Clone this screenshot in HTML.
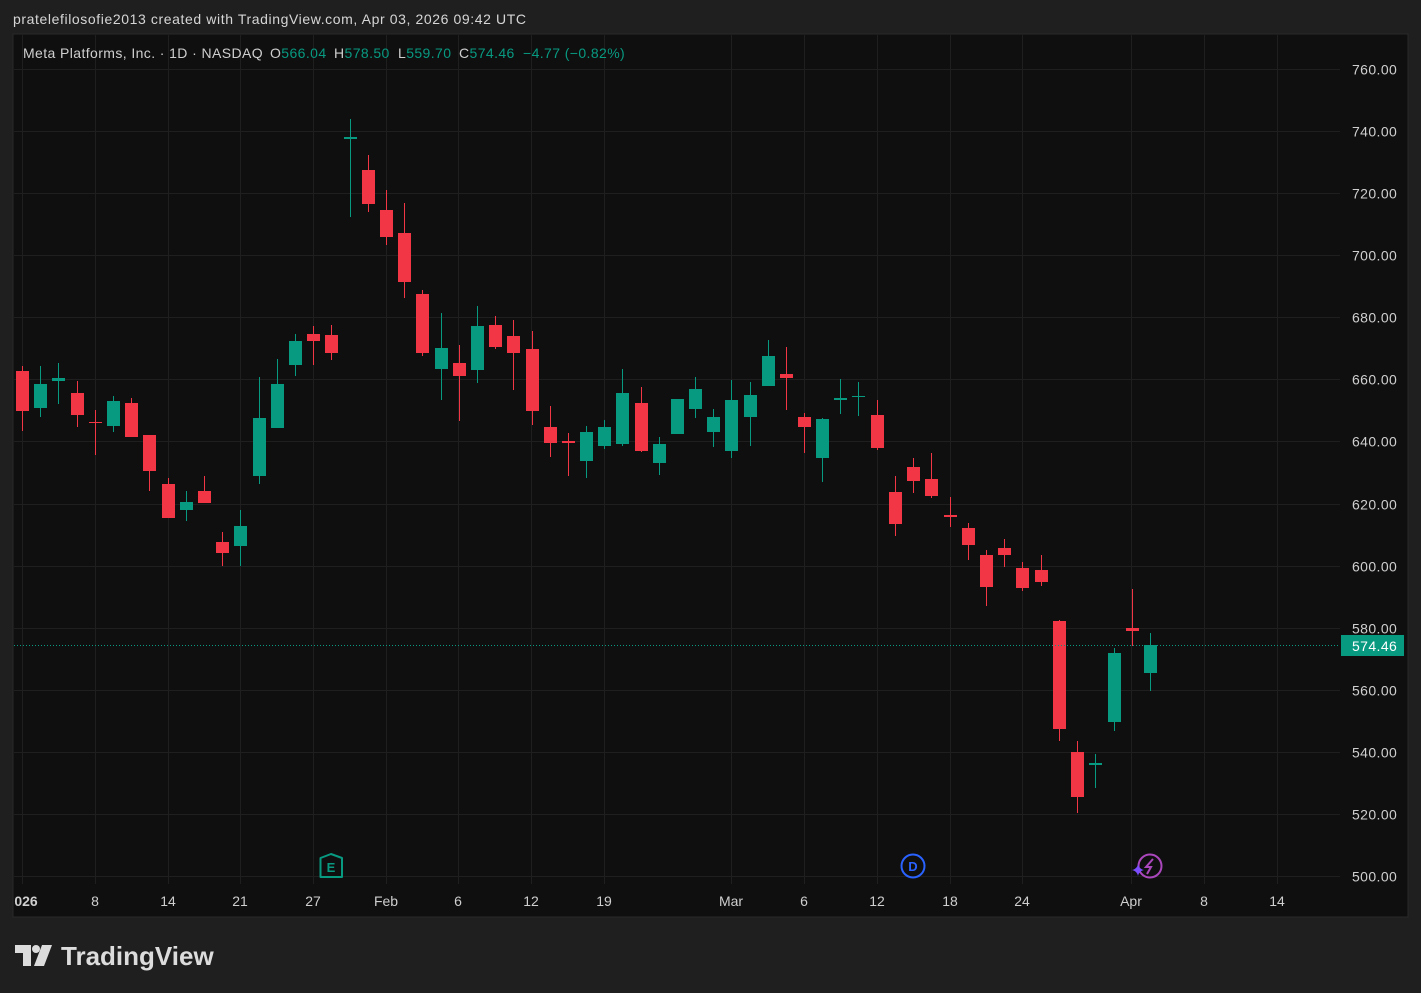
<!DOCTYPE html>
<html><head><meta charset="utf-8"><style>
html,body{margin:0;padding:0;background:#1f1f1f;width:1421px;height:993px;overflow:hidden;font-family:"Liberation Sans",sans-serif}
#hdr{position:absolute;left:13px;top:11px;font-size:14px;color:#d6d6d6;letter-spacing:0.6px}
svg{position:absolute;left:0;top:0}
</style></head><body>
<div id="hdr">pratelefilosofie2013 created with TradingView.com, Apr 03, 2026 09:42 UTC</div>
<svg width="1421" height="993" id="s" xmlns="http://www.w3.org/2000/svg" font-family="Liberation Sans, sans-serif">
<rect x="13" y="34" width="1395" height="883" fill="#0f0f0f" stroke="#2a2a2a" stroke-width="1"/>
<g id="grid" stroke="#1f1f1f" stroke-width="1"></g>
<g id="c"></g>
<line x1="14" y1="645.5" x2="1340" y2="645.5" stroke="#089981" stroke-dasharray="1,2"/>
<g font-size="14" fill="#cfcfcf" id="ax" letter-spacing="0.4"></g>
<rect x="1341" y="635" width="63" height="21" fill="#089981"/>
<text x="1352" y="651" font-size="14" fill="#fff" letter-spacing="0.4">574.46</text>
<g font-size="14" fill="#cfcfcf" text-anchor="middle">
<text x="26" y="906" font-weight="bold">026</text><text x="95" y="906">8</text><text x="168" y="906">14</text><text x="240" y="906">21</text><text x="313" y="906">27</text><text x="386" y="906">Feb</text><text x="458" y="906">6</text><text x="531" y="906">12</text><text x="604" y="906">19</text><text x="731" y="906">Mar</text><text x="804" y="906">6</text><text x="877" y="906">12</text><text x="950" y="906">18</text><text x="1022" y="906">24</text><text x="1131" y="906">Apr</text><text x="1204" y="906">8</text><text x="1277" y="906">14</text>
</g>
<g font-size="14" fill="#cfcfcf" letter-spacing="0.4">
<text x="23" y="58">Meta Platforms, Inc. · 1D · NASDAQ</text>
<text x="270" y="58">O<tspan fill="#089981">566.04</tspan></text>
<text x="334" y="58">H<tspan fill="#089981">578.50</tspan></text>
<text x="398" y="58">L<tspan fill="#089981">559.70</tspan></text>
<text x="459" y="58">C<tspan fill="#089981">574.46</tspan></text>
<text x="523" y="58" fill="#089981">−4.77 (−0.82%)</text>
</g>
<path d="M320.5 858 L331 854 L342 858 L342 877 L320.5 877 Z" fill="none" stroke="#089981" stroke-width="2" stroke-linejoin="round"/>
<text x="331" y="872" font-size="13" font-weight="bold" fill="#089981" text-anchor="middle">E</text>
<circle cx="913" cy="866" r="11.5" fill="none" stroke="#2962ff" stroke-width="2"/>
<text x="913" y="871" font-size="13" font-weight="bold" fill="#2962ff" text-anchor="middle">D</text>
<circle cx="1150" cy="866" r="11.5" fill="none" stroke="#ab47bc" stroke-width="2"/>
<path d="M1153 859 L1146 867 L1151 867 L1147 874" fill="none" stroke="#ab47bc" stroke-width="2"/>
<path d="M1138 864 Q1139 869 1144 870 Q1139 871 1138 876 Q1137 871 1132 870 Q1137 869 1138 864Z" fill="#7c4dff"/>
<g fill="#dcdcdc">
<path d="M15 945 H31 V966 H23 V953 H15 Z"/>
<circle cx="36" cy="949" r="4"/>
<path d="M42 945 H52 L44 966 H34 Z"/>
</g>
<text x="61" y="965" font-size="26" font-weight="bold" fill="#dcdcdc" letter-spacing="0">TradingView</text>
</svg>
<script>
var ns="http://www.w3.org/2000/svg",g=document.getElementById('grid'),c=document.getElementById('c'),ax=document.getElementById('ax');
function el(p,t,a){var e=document.createElementNS(ns,t);for(var k in a)e.setAttribute(k,a[k]);p.appendChild(e);return e;}
for(var k=0;k<=13;k++){var y=Math.round(69+k*62.08)+.5;el(g,'line',{x1:14,x2:1340,y1:y,y2:y});var t=el(ax,'text',{x:1352,y:y+5});t.textContent=(760-20*k).toFixed(2);}
[22,95,168,240,313,386,458,531,604,731,804,877,950,1022,1131,1204,1277].forEach(function(x){el(g,'line',{x1:x+.5,x2:x+.5,y1:35,y2:884});});
var d=[[22,'r',371,411,366,431],[40,'g',384,408,366,417],[58,'g',378,381,363,404],[77,'r',393,415,381,427],[95,'r',422,423,410,455],[113,'g',401,426,396,432],[131,'r',403,437,398,437],[149,'r',435,471,435,491],[168,'r',484,518,478,518],[186,'g',502,510,491,521],[204,'r',491,503,476,503],[222,'r',542,553,532,566],[240,'g',526,546,510,566],[259,'g',418,476,377,484],[277,'g',384,428,359,428],[295,'g',341,365,334,376],[313,'r',334,341,326,365],[331,'r',335,353,325,360],[350,'g',137,139,119,217],[368,'r',170,204,155,212],[386,'r',210,237,190,245],[404,'r',233,282,203,298],[422,'r',294,353,290,356],[441,'g',348,369,313,400],[459,'r',363,376,345,421],[477,'g',326,370,306,383],[495,'r',325,347,316,349],[513,'r',336,353,320,390],[532,'r',349,411,331,425],[550,'r',427,443,406,457],[568,'r',441,443,433,476],[586,'g',432,461,426,478],[604,'g',427,446,420,449],[622,'g',393,444,369,446],[641,'r',403,451,387,452],[659,'g',444,463,437,475],[677,'g',399,434,399,434],[695,'g',389,409,377,418],[713,'g',417,432,409,447],[731,'g',400,451,380,458],[750,'g',395,417,382,446],[768,'g',356,386,340,386],[786,'r',374,378,347,410],[804,'r',417,427,413,453],[822,'g',419,458,418,482],[840,'g',398,400,379,414],[858,'g',396,397,382,416],[877,'r',415,448,400,450],[895,'r',492,524,476,536],[913,'r',467,481,458,493],[931,'r',479,496,453,498],[950,'r',515,517,497,527],[968,'r',528,545,523,560],[986,'r',555,587,550,606],[1004,'r',548,555,539,567],[1022,'r',568,588,562,591],[1041,'r',570,582,555,586],[1059,'r',621,729,620,741],[1077,'r',752,797,741,813],[1095,'g',763,765,754,788],[1114,'g',653,722,648,731],[1132,'r',628,631,589,646],[1150,'g',645,673,633,691]];
d.forEach(function(a){var col=a[1]=='g'?'#089981':'#f23645';el(c,'rect',{x:a[0],y:a[4],width:1,height:a[5]-a[4],fill:col});var h=Math.max(a[3]-a[2],1);el(c,'rect',{x:a[0]-6,y:a[2],width:13,height:h,fill:col});});
</script>
</body></html>
